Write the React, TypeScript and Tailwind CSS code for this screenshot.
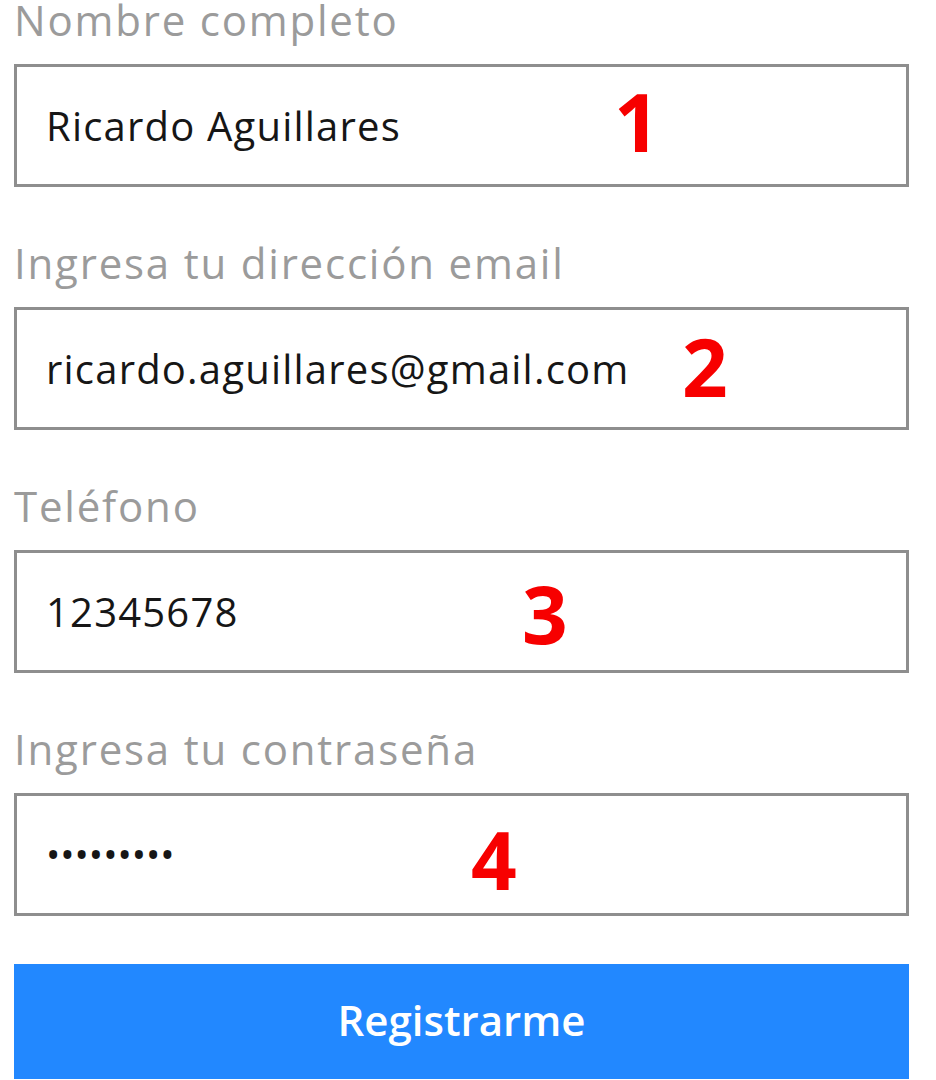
import React from "react";

const fields = [
  { label: "Nombre completo", value: "Ricardo Aguillares", num: "1", numPos: "left-[597px] top-[14px]", dots: false },
  { label: "Ingresa tu dirección email", value: "ricardo.aguillares@gmail.com", num: "2", numPos: "left-[665px] top-[16px]", dots: false },
  { label: "Teléfono", value: "12345678", num: "3", numPos: "left-[505px] top-[20px]", dots: false },
  { label: "Ingresa tu contraseña", value: "•••••••••", num: "4", numPos: "left-[454px] top-[23px]", dots: true },
];

export default function App() {
  return (
    <div className="w-[936px] h-[1080px] bg-white font-['Open_Sans',sans-serif]">
      <div className="w-[895px] ml-[14px] flex flex-col">
        {fields.map((f, i) => (
          <div key={f.label} className={i === 0 ? "" : "mt-[56px]"}>
            <div className="h-[64px] text-[42px] leading-[40px] tracking-[1.8px] text-[#9b9b9b]">{f.label}</div>
            <div className="relative h-[123px] border-[3px] border-[#8e8e8e] flex items-center pl-[29px]">
              {f.dots ? (
                <span className="text-[38px] text-[#161616]">{f.value}</span>
              ) : (
                <span className="text-[40px] tracking-[1.2px] text-[#161616]">{f.value}</span>
              )}
              <span className={`absolute ${f.numPos} text-[80px] leading-none font-bold text-[#f70000]`}>{f.num}</span>
            </div>
          </div>
        ))}
        <button className="mt-[48px] h-[115px] w-full bg-[#2288ff] text-white text-[42px] font-semibold flex items-start justify-center pt-[24px]">
          Registrarme
        </button>
      </div>
    </div>
  );
}
